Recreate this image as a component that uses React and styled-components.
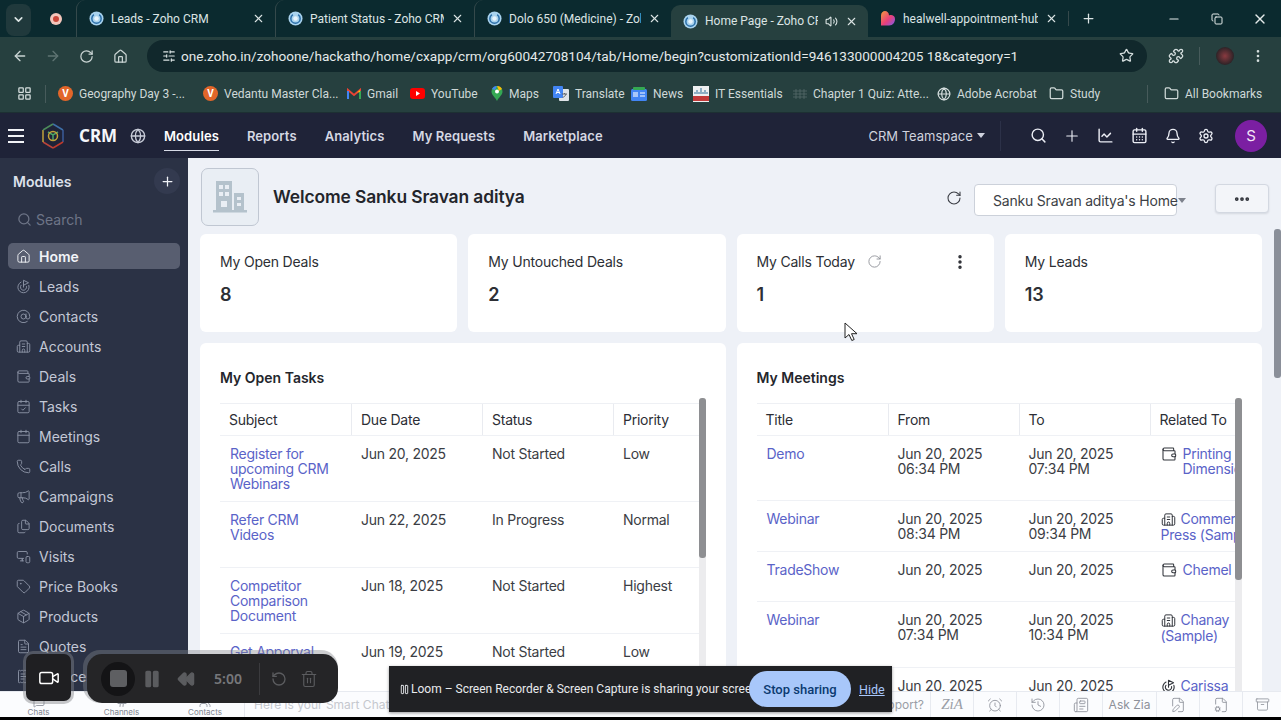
import React from "react";
import styled, { createGlobalStyle } from "styled-components";
import {
  ChevronDown, X, Plus, Minus, ArrowLeft, ArrowRight, RotateCw, House, SlidersHorizontal, Star, Puzzle,
  EllipsisVertical, LayoutGrid, Folder, Globe, Volume2, Search, ChartLine, CalendarDays, Bell, Settings, Goal,
  AtSign, Building2, Wallet, CalendarCheck, Calendar, Phone, Megaphone, Files, MonitorSmartphone, Tag, Package,
  FileText, ReceiptText, Video, Pause, Rewind, RotateCcw, Trash2, AlarmClock, History, Newspaper, FilePen, FileCog, Archive,
  Ellipsis, Copy, MessageSquare, Users, Hash
} from "lucide-react";

const Global = createGlobalStyle`
  html, body { margin: 0; padding: 0; background: #000; }
  * { box-sizing: border-box; }
  body { font-family: "Inter", "Liberation Sans", sans-serif; }
`;

const Page = styled.div`
  position: relative; width: 1281px; height: 720px; overflow: hidden; display: flex; flex-direction: column; background: #000;
`;

/* ---------- browser chrome ---------- */
const TabStrip = styled.div`
  height: 37px; background: #0b2a2f; display: flex; align-items: center; flex: none;
  font-family: Roboto, "Liberation Sans", sans-serif; color: #dbe4e4; font-size: 12px;
`;
const TabMenu = styled.div`
  width: 25px; height: 32px; margin: 2px 0 0 6px; border-radius: 8px; background: #20393c; display: flex; align-items: center; justify-content: center; flex: none;
`;
const RecordDot = styled.div`
  width: 12px; height: 12px; margin: 0 14px 0 19px; border-radius: 50%; background: #f3c6bb; flex: none; display: flex; align-items: center; justify-content: center;
  &::after { content: ""; width: 6px; height: 6px; border-radius: 50%; background: #c9473a; }
`;
const Tab = styled.div`
  width: ${p => p.$w}px; height: ${p => (p.$active ? 32 : 37)}px; margin-top: ${p => (p.$active ? 5 : 0)}px; flex: none; display: flex; align-items: center; padding: 0 10px 0 12px;
  gap: 7px; position: relative;
  background: ${p => (p.$active ? "#26403f" : "transparent")}; border-radius: 9px 9px 0 0;
  border-left: ${p => (p.$sep ? "1px solid #35494b" : "none")};
  background-clip: ${p => (p.$sep ? "padding-box" : "border-box")};
`;
const TabTitle = styled.span`
  flex: 1; white-space: nowrap; overflow: hidden; min-width: 0; color: #dbe4e4;
`;
const TabSpacer = styled.div`flex: 1;`;
const WindowBtn = styled.div`
  width: 43px; display: flex; justify-content: center; color: #e4eaea;
`;
const NewTab = styled.div`
  width: 40px; display: flex; justify-content: center; color: #dbe4e4; border-left: 1px solid #35494b;
`;
const Toolbar = styled.div`
  height: 38px; background: #26403f; display: flex; align-items: center; flex: none; padding-left: 3px; color: #c9d4d3;
  font-family: Roboto, "Liberation Sans", sans-serif;
`;
const NavBtn = styled.div`
  width: 33.5px; display: flex; justify-content: center; color: ${p => (p.$off ? "#5f7473" : "#c9d4d3")};
`;
const UrlPill = styled.div`
  width: 1000px; height: 32px; margin-left: 10px; border-radius: 16px; background: #11282c; display: flex; align-items: center; padding: 0 13px 0 9px; flex: none; margin-top: -1px;
`;
const UrlIcon = styled.div`
  width: 25px; display: flex; justify-content: center; color: #dbe4e4; margin-right: 0;
`;
const UrlText = styled.span`
  flex: 1; font-size: 13.6px; color: #e4eaea; white-space: nowrap; overflow: hidden;
`;
const ToolIcon = styled.div`
  width: ${p => p.$w || 34}px; display: flex; justify-content: center; color: #d5dede; flex: none;
`;
const Sep = styled.div`
  width: 1px; height: ${p => p.$h || 18}px; background: #475b5b; flex: none;
`;
const AvatarSmall = styled.div`
  width: 18px; height: 18px; border-radius: 50%; background: radial-gradient(circle at 50% 50%, #8a3a40, #2d2327 70%); flex: none;
`;
const BookmarkBar = styled.div`
  height: 38px; background: #26403f; display: flex; align-items: center; flex: none; padding-left: 15px;
  font-family: Roboto, "Liberation Sans", sans-serif; font-size: 12px; color: #cfd9d8; border-bottom: 1px solid #1d3033;
`;
const Bookmark = styled.div`
  width: ${p => p.$w}px; display: flex; align-items: center; gap: 6px; flex: none; white-space: nowrap; overflow: hidden;
`;
const VBadge = styled.div`
  width: 15px; height: 15px; border-radius: 50%; background: #e2662a; color: #fff; font-size: 10px; font-weight: 700; display: flex; align-items: center; justify-content: center; flex: none;
`;

/* ---------- CRM nav ---------- */
const CrmNav = styled.div`
  height: 45px; background: #1f2338; display: flex; align-items: center; flex: none; color: #e6e8f0; padding-left: 6px;
`;
const Burger = styled.div`
  width: 20px; flex: none; display: flex; flex-direction: column; gap: 4px; padding: 0 2px;
  & > i { display: block; height: 2px; background: #f2f3f7; }
`;
const LogoSlot = styled.div`
  width: 53px; display: flex; justify-content: flex-start; padding-left: 15px; flex: none;
`;
const Brand = styled.div`
  font-size: 17px; font-weight: 700; color: #f5f6fa; width: 51px; flex: none; font-family: "Noto Sans", sans-serif;
`;
const GlobeSlot = styled.div`
  width: 25px; color: #c8ccd8; flex: none; display: flex;
`;
const NavLink = styled.div`
  font-size: 13px; font-weight: 600; color: ${p => (p.$active ? "#fff" : "#d5d8e3")}; margin-right: 28px; position: relative; white-space: nowrap; letter-spacing: .1px;
  &::after { content: ""; display: ${p => (p.$active ? "block" : "none")}; position: absolute; left: 0; right: 0; bottom: -7px; height: 1px; background: #d7dae6; }
`;
const NavRight = styled.div`
  margin-left: auto; display: flex; align-items: center;
`;
const Teamspace = styled.div`
  font-size: 13px; color: #cfd2de; width: 133px; display: flex; align-items: center; gap: 4px; border-right: 1px solid #2c3148; height: 30px; flex: none; white-space: nowrap;
  &::after { content: ""; border: 4px solid transparent; border-top: 5px solid #cfd2de; border-bottom: 0; }
`;
const NavIcon = styled.div`
  width: 33.6px; display: flex; justify-content: center; color: #eceef5; flex: none;
`;
const AvatarBig = styled.div`
  width: 32px; height: 32px; border-radius: 50%; background: #7b1fa2; color: #f3e6f7; display: flex; align-items: center; justify-content: center; font-size: 15px; margin: 0 14px 0 12px; flex: none;
`;

/* ---------- main ---------- */
const Main = styled.div`
  flex: none; height: 533px; display: flex; overflow: hidden;
`;
const Sidebar = styled.div`
  width: 188px; flex: none; background: #2b3245; padding: 0 8px; overflow: hidden; color: #c3c8d6;
`;
const SideHead = styled.div`
  height: 46px; display: flex; align-items: center; justify-content: space-between; padding: 0 0 0 5px; font-size: 14px; font-weight: 600; color: #dde1eb;
`;
const SidePlus = styled.div`
  width: 26px; height: 26px; border-radius: 50%; background: #333a4f; display: flex; align-items: center; justify-content: center; color: #f0f2f7;
`;
const SideSearch = styled.div`
  height: 30px; display: flex; align-items: center; gap: 4px; padding-left: 9px; font-size: 14px; color: #6e7587; margin-bottom: 9px;
`;
const SideItem = styled.div`
  height: 26px; margin-bottom: 4px; border-radius: 5px; display: flex; align-items: center; gap: 8px; padding-left: 8px; font-size: 14px; font-weight: ${p => (p.$active ? 600 : 400)}; white-space: nowrap;
  background: ${p => (p.$active ? "#585e70" : "transparent")}; color: ${p => (p.$active ? "#f2f4f8" : "#c3c8d6")};
  & > svg { color: ${p => (p.$active ? "#f2f4f8" : "#8b92a4")}; flex: none; }
`;
const Content = styled.div`
  flex: 1; min-width: 0; background: #eef1f7; display: flex; flex-direction: column; overflow: hidden;
`;
const Header = styled.div`
  height: 71px; flex: none; display: flex; align-items: flex-start; padding: 10px 12px 0 13px;
`;
const OrgTile = styled.div`
  width: 58px; height: 58px; border: 1px solid #c0c7d2; border-radius: 7px; background: #e9eef4; display: flex; align-items: center; justify-content: center; flex: none;
`;
const Welcome = styled.div`
  margin: 18px 0 0 14px; font-size: 17.4px; line-height: 21px; font-weight: 600; color: #23252b; white-space: nowrap; letter-spacing: -.1px;
`;
const HeaderRefresh = styled.div`
  margin: 22px 12px 0 auto; color: #3a3d44; display: flex;
`;
const HomeSelect = styled.div`
  width: 203px; height: 32px; margin-top: 16px; border: 1px solid #ccd1da; border-radius: 4px; background: #fff; display: flex; align-items: center; justify-content: space-between; padding: 0 14px 0 18px; font-size: 14px; color: #3d3f46; white-space: nowrap; letter-spacing: -.2px;
  &::after { content: ""; border: 4px solid transparent; border-top: 5px solid #7d828c; border-bottom: 0; }
`;
const MoreBtn = styled.div`
  width: 54px; height: 29px; margin: 16px 0 0 38px; border: 1px solid #d3d8e1; border-radius: 4px; background: #f3f5f9; display: flex; align-items: center; justify-content: center; color: #2e3138; box-shadow: 0 1px 2px rgba(30,40,60,.12);
`;
const ScrollArea = styled.div`
  flex: 1; min-height: 0; display: flex; overflow: hidden;
`;
const Grid = styled.div`
  width: 1062px; margin-left: 12px; padding-top: 5px; display: grid; grid-template-columns: repeat(4, 1fr); grid-auto-rows: min-content; gap: 11px; flex: none;
`;
const PageTrack = styled.div`
  width: 7px; margin-left: 12px; flex: none;
`;
const PageThumb = styled.div`
  height: 149px; background: #8a8f99; border-radius: 3px;
`;
const Card = styled.div`
  height: 98px; background: #fff; border-radius: 6px; padding: 19px 20px;
`;
const CardTop = styled.div`
  display: flex; align-items: center; height: 17px; font-size: 14px; color: #2d2f35; letter-spacing: -.2px; white-space: nowrap;
`;
const CardSpin = styled.div`
  margin-left: 12px; display: flex; color: #8a8d94;
`;
const CardMenu = styled.div`
  margin-left: auto; margin-right: 5px; display: flex; color: #2a2c32;
`;
const CardValue = styled.div`
  margin-top: 14px; font-size: 18px; line-height: 22px; font-weight: 600; color: #2d2f35;
`;
const Panel = styled.div`
  grid-column: span 2; height: 400px; background: #fff; border-radius: 6px; padding: 25px 20px 0;
`;
const PanelTitle = styled.div`
  font-size: 14px; line-height: 20px; font-weight: 600; color: #24262c;
`;
const TableWrap = styled.div`
  display: flex; margin-top: 15px;
`;
const Table = styled.div`
  flex: 1; min-width: 0; overflow: hidden; border-top: 1px solid #eef0f4;
`;
const Row = styled.div`
  display: grid; grid-template-columns: 131px 131px 131px 131px; height: ${p => p.$h}px; border-bottom: 1px solid #eff1f5; font-size: 14px; line-height: 15px; color: #3b3d44; letter-spacing: -.25px;
`;
const HeadCell = styled.div`
  display: flex; align-items: center; padding-left: 9px; color: #2c2e35; position: relative; height: 31px;
  border-left: ${p => (p.$first ? "none" : "1px solid #e9ebf0")}; margin: 0;
`;
const Cell = styled.div`
  padding: 10px 8px 0 10px; min-width: 0; white-space: pre-line;
`;
const LinkCell = styled(Cell)`
  color: #5a63c8;
`;
const RelatedCell = styled.div`
  padding: 10px 0 0 11px; color: #5a63c8; white-space: nowrap; overflow: hidden; width: 86px;
  & svg { color: #33363d; vertical-align: -3px; margin-right: 5px; }
`;
const RelatedFlex = styled(RelatedCell)`
  display: flex; align-items: flex-start; gap: 6px;
  & svg { margin-right: 0; flex: none; }
`;
const ScrollTrack = styled.div`
  width: 7px; margin-top: -5px; background: #ececee; border-radius: 3px; flex: none; height: 400px;
`;
const ScrollThumb = styled.div`
  height: ${p => p.$h}px; background: #8e8f92; border-radius: 3px;
`;

/* ---------- bottom bar ---------- */
const BottomBar = styled.div`
  height: 26px; flex: none; background: #fbfcfe; border-top: 1px solid #e7eaf0; display: flex; align-items: stretch; color: #8f939c;
`;
const ChatTabs = styled.div`
  width: 245px; flex: none; display: flex; padding-left: 0; border-right: 1px solid #e4e7ed;
`;
const ChatTab = styled.div`
  width: ${p => p.$w}px; display: flex; flex-direction: column; align-items: center; justify-content: flex-end; font-size: 8px; color: #7f8590; line-height: 9px; padding-bottom: 0;
  & > svg { color: #9a9ea7; }
`;
const SmartChat = styled.div`
  flex: 1; padding-left: 9px; font-size: 12px; color: #c5c8ce; display: flex; align-items: center; white-space: nowrap; overflow: hidden;
`;
const Support = styled.div`
  font-size: 12px; color: #9a9ea6; display: flex; align-items: center; margin-right: 0; padding-right: 6px; white-space: nowrap;
`;
const BarCell = styled.div`
  width: ${p => p.$w || 43}px; flex: none; display: flex; align-items: center; justify-content: center; border-left: 1px solid #e7eaf0; font-size: 12px; color: #8d919a; white-space: nowrap;
`;
const ZiaMark = styled.span`
  font-family: "Liberation Serif", serif; font-style: italic; font-size: 15px; color: #9a9ea6;
`;

/* ---------- overlays ---------- */
const CameraBox = styled.div`
  position: absolute; left: 26px; top: 654px; width: 45px; height: 47px; border-radius: 7px; background: #1f1f22; box-shadow: 0 0 0 3px rgba(130,132,138,.45); display: flex; align-items: center; justify-content: center; color: #fff;
`;
const LoomBar = styled.div`
  position: absolute; left: 87px; top: 654px; width: 251px; height: 49px; border-radius: 15px; background: #252527; box-shadow: -2px -2px 0 2px rgba(130,132,138,.4); display: flex; align-items: center; padding-left: 14px; color: #57585b;
`;
const StopRing = styled.div`
  width: 34px; height: 34px; border-radius: 50%; background: #141416; display: flex; align-items: center; justify-content: center; flex: none;
  &::after { content: ""; width: 17px; height: 17px; border-radius: 3px; background: #5e5f62; }
`;
const LoomIcon = styled.div`
  width: ${p => p.$w}px; display: flex; justify-content: center; color: #5b5c5f; flex: none;
`;
const LoomTime = styled.div`
  width: 50px; text-align: center; font-size: 14px; font-weight: 600; color: #77787b; flex: none; font-family: "Noto Sans", sans-serif;
`;
const LoomDivider = styled.div`
  width: 1px; height: 32px; background: #3b3b3e; flex: none;
`;
const ShareBanner = styled.div`
  position: absolute; left: 389px; top: 666px; width: 503px; height: 46px; background: #202124; box-shadow: 0 1px 3px rgba(0,0,0,.4); display: flex; align-items: center; padding-left: 10px; color: #e8eaed; font-family: Roboto, "Liberation Sans", sans-serif; font-size: 12px; white-space: nowrap;
`;
const BannerPause = styled.div`
  width: 12px; flex: none; display: flex; color: #e8eaed;
`;
const BannerText = styled.span`
  width: 338px; flex: none;
`;
const StopButton = styled.div`
  width: 102px; height: 36px; border-radius: 18px; background: #a8c7fa; color: #0a3a70; display: flex; align-items: center; justify-content: center; font-size: 13px; font-weight: 500; flex: none;
`;
const HideLink = styled.span`
  margin-left: 8px; color: #a8c7fa; text-decoration: underline; font-size: 12.5px;
`;
const Cursor = styled.svg`
  position: absolute; left: 844px; top: 322px;
`;

/* ---------- drawings ---------- */
const ZohoFav = () => (
  <svg width="15" height="15" viewBox="0 0 16 16" style={{ flex: "none" }}>
    <circle cx="8" cy="8" r="7.5" fill="#a9d3ee" />
    <circle cx="8" cy="8" r="5" fill="none" stroke="#2a6ea8" strokeWidth="1.6" strokeDasharray="20 6" />
    <circle cx="8" cy="8" r="2.4" fill="#e8f4fb" />
  </svg>
);
const HeartFav = () => (
  <svg width="16" height="17" viewBox="0 0 16 17" style={{ flex: "none" }}>
    <defs>
      <linearGradient id="hf" x1="0" y1="0" x2="1" y2="1">
        <stop offset="0" stopColor="#f59a3e" /><stop offset=".55" stopColor="#ea3f7a" /><stop offset="1" stopColor="#7a5cf0" />
      </linearGradient>
    </defs>
    <path d="M1 5.5C1 2.5 3 1 5 1s4 1.5 4 4.5c2-1 6-.5 6 3.500 0 3-2 6.500-6 6.500H1z" fill="url(#hf)" />
  </svg>
);
const GmailIcon = () => (
  <svg width="14" height="12" viewBox="0 0 14 12" style={{ flex: "none" }}>
    <path d="M1 11V2l6 5 6-5v9" fill="none" stroke="#ea4335" strokeWidth="2" />
    <path d="M1 11V3" stroke="#4285f4" strokeWidth="2" /><path d="M13 11V3" stroke="#34a853" strokeWidth="2" />
    <path d="M10 4.500 13 2v2" fill="#fbbc04" />
  </svg>
);
const YoutubeIcon = () => (
  <svg width="15" height="11" viewBox="0 0 15 11" style={{ flex: "none" }}>
    <rect width="15" height="11" rx="3" fill="#f00" /><path d="M6 3l4 2.500L6 8z" fill="#fff" />
  </svg>
);
const MapsIcon = () => (
  <svg width="12" height="15" viewBox="0 0 12 15" style={{ flex: "none" }}>
    <path d="M6 0a5.500 5.500 0 0 1 5.500 5.500C11.500 9 8 11 6 15 4 11 .5 9 .5 5.500A5.500 5.500 0 0 1 6 0z" fill="#34a853" />
    <path d="M1 3a5.500 5.500 0 0 1 5-3l-2 4z" fill="#4285f4" /><path d="M6 0a5.500 5.500 0 0 1 5 3L8 5z" fill="#fbbc04" />
    <circle cx="6" cy="5.500" r="2" fill="#fff" />
  </svg>
);
const TranslateIcon = () => (
  <svg width="16" height="16" viewBox="0 0 16 16" style={{ flex: "none" }}>
    <rect x="6" y="3" width="10" height="12" rx="1" fill="#dfe3e8" /><rect width="10" height="12" rx="1" fill="#4285f4" />
    <path d="M3 8l2-5 2 5M3.800 6.500h2.400" stroke="#fff" fill="none" />
    <path d="M9 8h5M11.500 7v1M13 8c-.5 2-2 3-3.500 3.500" stroke="#5f6368" fill="none" />
  </svg>
);
const NewsIcon = () => (
  <svg width="16" height="14" viewBox="0 0 16 14" style={{ flex: "none" }}>
    <rect y="2" width="16" height="12" rx="1.500" fill="#4285f4" /><rect x="2" width="12" height="3" rx="1" fill="#34a853" />
    <rect x="2" y="5" width="5" height="5" fill="#a8c7fa" /><path d="M9 6h5M9 9h5" stroke="#fff" />
  </svg>
);
const CiscoIcon = () => (
  <svg width="16" height="16" viewBox="0 0 16 16" style={{ flex: "none" }}>
    <rect width="16" height="16" fill="#eef0f1" />
    <path d="M2 6v2M4 4v4M6 6v2M8 2v6M10 6v2M12 4v4M14 6v2" stroke="#2d6d95" />
    <rect y="10" width="16" height="5" fill="#c23a3a" />
  </svg>
);
const LinesIcon = () => (
  <svg width="14" height="10" viewBox="0 0 14 10" style={{ flex: "none" }}>
    <path d="M0 2h14M0 5h14M0 8h14M3 0v10M7 0v10M11 0v10" stroke="#56696a" strokeWidth=".8" />
  </svg>
);
const CrmLogo = () => (
  <svg width="24" height="26" viewBox="0 0 24 26" fill="none" strokeWidth="1.500">
    <path d="M12 1 22 7" stroke="#3d6fa8" /><path d="M22 7v12" stroke="#3b5c9a" /><path d="M22 19l-10 6" stroke="#c0392b" />
    <path d="M12 25 2 19" stroke="#b9443a" /><path d="M2 19V7" stroke="#c2a23a" /><path d="M2 7l10-6" stroke="#4c8a5a" />
    <path d="M7 9l5 3 5-3M12 12v6" stroke="#4aa567" /><circle cx="12" cy="13" r="4.500" stroke="#c2a23a" />
  </svg>
);
const OrgIcon = () => (
  <svg width="34" height="34" viewBox="0 0 34 34" fill="#b4c2cc">
    <path d="M3 1h16v29H3z" /><path d="M21 13h10v17H21z" /><rect y="30" width="34" height="2.500" />
    <g fill="#e9eef4">
      <rect x="6" y="5" width="4" height="4" /><rect x="12" y="5" width="4" height="4" />
      <rect x="6" y="12" width="4" height="4" /><rect x="12" y="12" width="4" height="4" />
      <rect x="8" y="21" width="6" height="6" /><rect x="24" y="17" width="4" height="3" /><rect x="24" y="23" width="4" height="3" />
    </g>
  </svg>
);

const sideItems = [
  ["Home", House], ["Leads", Goal], ["Contacts", AtSign], ["Accounts", Building2], ["Deals", Wallet], ["Tasks", CalendarCheck],
  ["Meetings", Calendar], ["Calls", Phone], ["Campaigns", Megaphone], ["Documents", Files], ["Visits", MonitorSmartphone],
  ["Price Books", Tag], ["Products", Package], ["Quotes", FileText], ["Invoices", ReceiptText],
];
const tasks = [
  ["Register for\nupcoming CRM\nWebinars", "Jun 20, 2025", "Not Started", "Low"],
  ["Refer CRM Videos", "Jun 22, 2025", "In Progress", "Normal"],
  ["Competitor\nComparison\nDocument", "Jun 18, 2025", "Not Started", "Highest"],
  ["Get Apporval", "Jun 19, 2025", "Not Started", "Low"],
];
const bookmarks = [
  [<VBadge>V</VBadge>, "Geography Day 3 -...", 145], [<VBadge>V</VBadge>, "Vedantu Master Cla...", 144], [<GmailIcon />, "Gmail", 63],
  [<YoutubeIcon />, "YouTube", 81], [<MapsIcon />, "Maps", 62], [<TranslateIcon />, "Translate", 78], [<NewsIcon />, "News", 62],
  [<CiscoIcon />, "IT Essentials", 100], [<LinesIcon />, "Chapter 1 Quiz: Atte...", 144], [<Globe size={14} color="#d5dede" />, "Adobe Acrobat", 112],
  [<Folder size={15} />, "Study", 98],
];

export default function App() {
  return (
    <Page>
      <Global />
      <TabStrip>
        <TabMenu><ChevronDown size={13} strokeWidth={3} /></TabMenu>
        <RecordDot />
        <Tab $w={199} $sep><ZohoFav /><TabTitle>Leads - Zoho CRM</TabTitle><X size={13} /></Tab>
        <Tab $w={199} $sep><ZohoFav /><TabTitle>Patient Status - Zoho CRM</TabTitle><X size={13} /></Tab>
        <Tab $w={197} $sep><ZohoFav /><TabTitle>Dolo 650 (Medicine) - Zoho</TabTitle><X size={13} /></Tab>
        <Tab $w={197} $active><ZohoFav /><TabTitle>Home Page - Zoho CRM</TabTitle><Volume2 size={13} /><X size={13} /></Tab>
        <Tab $w={200}><HeartFav /><TabTitle>healwell-appointment-hub</TabTitle><X size={13} /></Tab>
        <NewTab><Plus size={15} /></NewTab>
        <TabSpacer />
        <WindowBtn><Minus size={14} /></WindowBtn>
        <WindowBtn><Copy size={12} /></WindowBtn>
        <WindowBtn><X size={16} /></WindowBtn>
      </TabStrip>
      <Toolbar>
        <NavBtn><ArrowLeft size={16} /></NavBtn>
        <NavBtn $off><ArrowRight size={16} /></NavBtn>
        <NavBtn><RotateCw size={15} /></NavBtn>
        <NavBtn><House size={15} /></NavBtn>
        <UrlPill>
          <UrlIcon><SlidersHorizontal size={14} /></UrlIcon>
          <UrlText>one.zoho.in/zohoone/hackatho/home/cxapp/crm/org60042708104/tab/Home/begin?customizationId=946133000004205 18&amp;category=1</UrlText>
          <ToolIcon $w={16}><Star size={15} /></ToolIcon>
        </UrlPill>
        <ToolIcon $w={46} style={{ marginLeft: 6 }}><Puzzle size={16} /></ToolIcon>
        <Sep />
        <ToolIcon $w={50}><AvatarSmall /></ToolIcon>
        <ToolIcon $w={16}><EllipsisVertical size={16} /></ToolIcon>
      </Toolbar>
      <BookmarkBar>
        <ToolIcon $w={18}><LayoutGrid size={15} /></ToolIcon>
        <Sep $h={18} style={{ margin: "0 12px 0 12px" }} />
        {bookmarks.map(([icon, label, w]) => (
          <Bookmark key={label} $w={w}>{icon}<span>{label}</span></Bookmark>
        ))}
        <Sep $h={18} style={{ margin: "0 16px 0 0" }} />
        <Bookmark $w={100}><Folder size={15} /><span>All Bookmarks</span></Bookmark>
      </BookmarkBar>

      <CrmNav>
        <Burger><i /><i /><i /></Burger>
        <LogoSlot><CrmLogo /></LogoSlot>
        <Brand>CRM</Brand>
        <GlobeSlot><Globe size={16} /></GlobeSlot>
        <NavLink $active style={{ marginLeft: 9 }}>Modules</NavLink>
        <NavLink>Reports</NavLink>
        <NavLink>Analytics</NavLink>
        <NavLink>My Requests</NavLink>
        <NavLink>Marketplace</NavLink>
        <NavRight>
          <Teamspace>CRM Teamspace</Teamspace>
          <NavIcon style={{ marginLeft: 20 }}><Search size={17} /></NavIcon>
          <NavIcon><Plus size={18} strokeWidth={1.5} /></NavIcon>
          <NavIcon><ChartLine size={17} /></NavIcon>
          <NavIcon><CalendarDays size={17} /></NavIcon>
          <NavIcon><Bell size={16} /></NavIcon>
          <NavIcon><Settings size={16} /></NavIcon>
          <AvatarBig>S</AvatarBig>
        </NavRight>
      </CrmNav>

      <Main>
        <Sidebar>
          <SideHead>Modules<SidePlus><Plus size={15} /></SidePlus></SideHead>
          <SideSearch><Search size={15} />Search</SideSearch>
          {sideItems.map(([label, Icon], i) => (
            <SideItem key={label} $active={i === 0}><Icon size={15} strokeWidth={1.5} />{label}</SideItem>
          ))}
        </Sidebar>
        <Content>
          <Header>
            <OrgTile><OrgIcon /></OrgTile>
            <Welcome>Welcome Sanku Sravan aditya</Welcome>
            <HeaderRefresh><RotateCw size={16} strokeWidth={1.6} /></HeaderRefresh>
            <HomeSelect>Sanku Sravan aditya's Home</HomeSelect>
            <MoreBtn><Ellipsis size={18} strokeWidth={3} /></MoreBtn>
          </Header>
          <ScrollArea>
            <Grid>
              <Card><CardTop>My Open Deals</CardTop><CardValue>8</CardValue></Card>
              <Card><CardTop>My Untouched Deals</CardTop><CardValue>2</CardValue></Card>
              <Card>
                <CardTop>
                  My Calls Today
                  <CardSpin><RotateCw size={15} strokeWidth={1.4} /></CardSpin>
                  <CardMenu><EllipsisVertical size={18} strokeWidth={2.6} /></CardMenu>
                </CardTop>
                <CardValue>1</CardValue>
              </Card>
              <Card><CardTop>My Leads</CardTop><CardValue>13</CardValue></Card>

              <Panel>
                <PanelTitle>My Open Tasks</PanelTitle>
                <TableWrap>
                  <Table>
                    <Row $h={32}>
                      <HeadCell $first>Subject</HeadCell><HeadCell>Due Date</HeadCell><HeadCell>Status</HeadCell><HeadCell>Priority</HeadCell>
                    </Row>
                    {tasks.map(t => (
                      <Row key={t[0]} $h={66}>
                        <LinkCell>{t[0]}</LinkCell><Cell>{t[1]}</Cell><Cell>{t[2]}</Cell><Cell>{t[3]}</Cell>
                      </Row>
                    ))}
                  </Table>
                  <ScrollTrack><ScrollThumb $h={160} /></ScrollTrack>
                </TableWrap>
              </Panel>

              <Panel>
                <PanelTitle>My Meetings</PanelTitle>
                <TableWrap>
                  <Table>
                    <Row $h={32}>
                      <HeadCell $first>Title</HeadCell><HeadCell>From</HeadCell><HeadCell>To</HeadCell><HeadCell>Related To</HeadCell>
                    </Row>
                    <Row $h={65}>
                      <LinkCell>Demo</LinkCell><Cell>{"Jun 20, 2025\n06:34 PM"}</Cell><Cell>{"Jun 20, 2025\n07:34 PM"}</Cell>
                      <RelatedFlex><Wallet size={16} strokeWidth={1.6} /><span>Printing<br />Dimensions</span></RelatedFlex>
                    </Row>
                    <Row $h={51}>
                      <LinkCell>Webinar</LinkCell><Cell>{"Jun 20, 2025\n08:34 PM"}</Cell><Cell>{"Jun 20, 2025\n09:34 PM"}</Cell>
                      <RelatedCell><Building2 size={15} strokeWidth={1.6} />Commercial<br />Press (Sample)</RelatedCell>
                    </Row>
                    <Row $h={50}>
                      <LinkCell>TradeShow</LinkCell><Cell>Jun 20, 2025</Cell><Cell>Jun 20, 2025</Cell>
                      <RelatedFlex><Wallet size={16} strokeWidth={1.6} /><span>Chemel</span></RelatedFlex>
                    </Row>
                    <Row $h={66}>
                      <LinkCell>Webinar</LinkCell><Cell>{"Jun 20, 2025\n07:34 PM"}</Cell><Cell>{"Jun 20, 2025\n10:34 PM"}</Cell>
                      <RelatedCell><Building2 size={15} strokeWidth={1.6} />Chanay<br />(Sample)</RelatedCell>
                    </Row>
                    <Row $h={51}>
                      <LinkCell>Meeting</LinkCell><Cell>Jun 20, 2025</Cell><Cell>Jun 20, 2025</Cell>
                      <RelatedCell><Goal size={15} strokeWidth={1.8} />Carissa</RelatedCell>
                    </Row>
                  </Table>
                  <ScrollTrack><ScrollThumb $h={182} /></ScrollTrack>
                </TableWrap>
              </Panel>
            </Grid>
            <PageTrack><PageThumb /></PageTrack>
          </ScrollArea>
        </Content>
      </Main>

      <BottomBar>
        <ChatTabs>
          <ChatTab $w={77}><MessageSquare size={12} />Chats</ChatTab>
          <ChatTab $w={89}><Hash size={12} />Channels</ChatTab>
          <ChatTab $w={78}><Users size={12} />Contacts</ChatTab>
        </ChatTabs>
        <SmartChat>Here is your Smart Chat (Ctrl+Space)</SmartChat>
        <Support>Need Support?</Support>
        <BarCell><ZiaMark>ZiA</ZiaMark></BarCell>
        <BarCell><AlarmClock size={16} strokeWidth={1.3} /></BarCell>
        <BarCell><History size={16} strokeWidth={1.3} /></BarCell>
        <BarCell><Newspaper size={16} strokeWidth={1.3} /></BarCell>
        <BarCell $w={54}>Ask Zia</BarCell>
        <BarCell><FilePen size={16} strokeWidth={1.3} /></BarCell>
        <BarCell><FileCog size={16} strokeWidth={1.3} /></BarCell>
        <BarCell $w={39}><Archive size={15} strokeWidth={1.3} /></BarCell>
      </BottomBar>

      <CameraBox><Video size={22} strokeWidth={1.6} /></CameraBox>
      <LoomBar>
        <StopRing />
        <LoomIcon $w={34}><Pause size={20} fill="currentColor" /></LoomIcon>
        <LoomIcon $w={34}><Rewind size={18} fill="currentColor" /></LoomIcon>
        <LoomTime>5:00</LoomTime>
        <LoomDivider style={{ marginLeft: 6 }} />
        <LoomIcon $w={38}><RotateCcw size={16} /></LoomIcon>
        <LoomIcon $w={22}><Trash2 size={18} strokeWidth={1.5} /></LoomIcon>
      </LoomBar>
      <ShareBanner>
        <BannerPause><Pause size={11} /></BannerPause>
        <BannerText>Loom – Screen Recorder &amp; Screen Capture is sharing your screen.</BannerText>
        <StopButton>Stop sharing</StopButton>
        <HideLink>Hide</HideLink>
      </ShareBanner>
      <Cursor width="14" height="20" viewBox="0 0 14 20">
        <path d="M1 1v15l4-3.500 2.800 6 2.400-1-2.700-5.800H13z" fill="#fff" stroke="#222" strokeWidth="1" />
      </Cursor>
    </Page>
  );
}
